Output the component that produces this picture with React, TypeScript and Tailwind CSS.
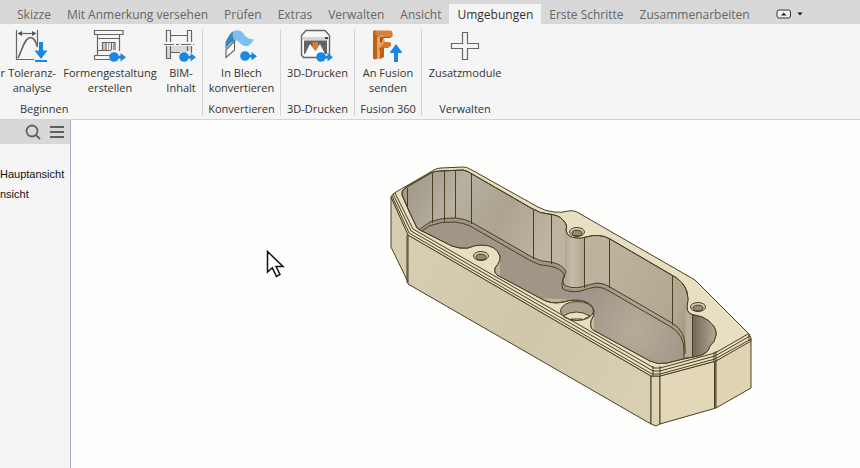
import { ReactNode } from "react";

const tabs = [
  "Skizze",
  "Mit Anmerkung versehen",
  "Prüfen",
  "Extras",
  "Verwalten",
  "Ansicht",
  "Umgebungen",
  "Erste Schritte",
  "Zusammenarbeiten",
];

const Badge = ({ x = 21, y = 28 }: { x?: number; y?: number }) => (
  <g transform={`translate(${x} ${y})`} fill="#1a87e0" stroke="none">
    <circle r="4.8" />
    <path d="M4-1.2H6.5V-4L12 .2 6.5 4.4V1.5H4Z" />
  </g>
);

const Icon = ({ children }: { children: ReactNode }) => (
  <svg
    width="34"
    height="34"
    viewBox="0 0 34 34"
    fill="none"
    stroke="#666"
    strokeWidth="1.2"
    aria-hidden="true"
  >
    {children}
  </svg>
);

const ToleranceIcon = () => (
  <Icon>
    <path d="M1.5 1V30.5H19M22.5 1V16" />
    <path d="M4 4.5H20" />
    <path d="M2.5 4.5 7 2V7ZM21.5 4.5 17 2V7Z" fill="#555" stroke="none" />
    <path d="M3 29C7 22 9 9 15.5 8.500C19 8.500 20.500 12 22.500 18" strokeWidth="1.6" />
    <path d="M24 13H28V21.500H32.500L26 30 19.500 21.500H24ZM20 31H32V33H20Z" fill="#1a87e0" stroke="none" />
  </Icon>
);

const MoldIcon = () => (
  <Icon>
    <path d="M1.500 1.500H30V5.500H1.500ZM4.500 5.500V26M26.500 5.500V22M4.500 9.500H26.500M4.500 21.500H18M1.500 30.500V26.500H17M1.500 30.500H17" />
    <path d="M9.500 21V13.500H22V21M13 13.500V21M18.500 13.500V21" />
    <path d="M11 14V21M15.700 14V21M20.500 14V21" stroke="#999" strokeWidth="1" />
    <Badge />
  </Icon>
);

const BimIcon = () => (
  <Icon>
    <path d="M7 17H23V23H7ZM24 17H27V22H24ZM3 17H6V29H3Z" fill="#d9d9d9" stroke="none" />
    <path d="M2.500 13V1.500H6.500V13M2.500 17V29.500H6.500V17M23.500 13V1.500H27.500V13M23.500 17V22M27.500 17V24M6.500 6.500H23.500M6.500 23.500H16" />
    <path d="M0 15.500H30" strokeDasharray="10 2 3 2" />
    <Badge x={20} />
  </Icon>
);

const SheetIcon = () => (
  <Icon>
    <path d="M2 21V28.500L10.500 21V12Z" fill="#fff" />
    <path d="M9.500 2C13 .5 17 1 19.500 4.500C22 8.500 25 10 30 10.500C27 15 24.500 18 21 17C16 16 15 10.500 11 11.500C9 9 8 6 9.500 2Z" fill="#7cc0ee" stroke="none" />
    <path d="M1.500 20.500V13C4 8 6 4 9.500 2C8 6 9 9 11 11.500C7 13 4 16 1.500 20.500Z" fill="#3b87bb" stroke="none" />
    <Badge y={27} />
  </Icon>
);

const PrinterIcon = () => (
  <Icon>
    <path d="M6 1.500H25L29.500 6.500V26L27.500 28.500H3.500L1.500 26V6.500Z" fill="#f8f8f8" strokeWidth="1.400" />
    <path d="M2 8H29V11H2Z" fill="#d5d5d5" stroke="none" />
    <path d="M25 8H28V10H25Z" fill="#444" stroke="none" />
    <path d="M4 11.500H27V25H4Z" fill="#636363" stroke="none" />
    <path d="M5 25 10 15 15.500 22 20 15 25 25Z" fill="#fff" stroke="none" />
    <path d="M12.500 13H18V18L15.300 22 12.500 18Z" fill="#e07c28" stroke="none" />
    <Badge />
  </Icon>
);

const FusionIcon = () => (
  <Icon>
    <g stroke="none">
      <path d="M2 2 5 1 10 7 9 29 3 30.500 2 29Z" fill="#b9601b" />
      <path d="M3 1.500H20L21.500 3V7L19 8H9L5 6Z" fill="#d9813a" />
      <path d="M9 13H18L20 14V17L17 19H9Z" fill="#d07730" />
      <path d="M6 8 12 6 14 12 8 20 11 27 9 30H6Z" fill="#eaa45e" />
      <path d="M9 8H19L21.500 6V7L19 9H12L11 13 9 14Z" fill="#a95516" />
      <path d="M9 19 13 18V28L9 30Z" fill="#b9601b" />
    </g>
    <path d="M25 15 31.500 24H27V33H23V24H18.500Z" fill="#1a87e0" stroke="none" />
  </Icon>
);

const PlusIcon = () => (
  <Icon>
    <path d="M14.500 3.500H19.500V14.500H30.500V19.500H19.500V30.500H14.500V19.500H3.500V14.500H14.500Z" />
  </Icon>
);

const Tool = ({ icon, lines, className = "" }: { icon: ReactNode; lines: string[]; className?: string }) => (
  <button className={`flex flex-col items-center whitespace-nowrap ${className}`}>
    {icon}
    <span className="flex flex-col items-center pt-[2px]">
      {lines.map((line) => (
        <span key={line}>{line}</span>
      ))}
    </span>
  </button>
);

const Group = ({ title, width, children }: { title: string; width: string; children: ReactNode }) => (
  <section className={`flex shrink-0 flex-col items-center justify-between ${width}`}>
    {children}
    <h2>{title}</h2>
  </section>
);

const Cursor = () => (
  <svg className="absolute left-[195px] top-[130px]" width="20" height="30" viewBox="0 0 20 30" aria-hidden="true">
    <path d="M1.500 1.500V22L6.300 17.800 10.500 26.500 14 24.500 10 16.500H17Z" fill="#fff" stroke="#111" strokeWidth="1.500" />
  </svg>
);

const cavity =
  "M420 230L417 228 409 211 402 195Q401 191 405 188L431 173Q435 171 440 171L463 170Q468 171 472 174L531 208Q541 214 549 214Q559 215 563 220Q568 225 566 230Q567 238 577 238Q581 239 586 237Q600 233 610 239L670 274Q684 281 687 292Q689 299 687 307Q687 314 694 315Q703 316 709 321Q717 328 716 335Q715 342 710 346Q708 354 698 356L683 359 667 363Q658 365 650 361L593 330Q590 328 591 321Q595 315 594 310Q591 301 577 300Q569 300 563 302Q551 305 540 298L497 275Q494 273 495 268Q501 261 500 256Q496 245 482 245Q474 245 468 248Q460 249 452 246Z";

const floor =
  "M420 229L430 222Q442 217 456 218Q465 219 471 222L532 257Q541 262 550 262Q563 264 566 272Q561 279 564 285Q571 289 582 287Q590 284 597 283Q604 283 610 287L672 323Q686 331 685 348V358L667 363Q658 365 650 361L593 330 577 300 540 298 497 275 468 248 452 246Z";

const floorEdge =
  "M420 229L430 222Q442 217 456 218Q465 219 471 222L532 257Q541 262 550 262Q563 264 566 272Q561 279 564 285Q571 289 582 287Q590 284 597 283Q604 283 610 287L672 323Q686 331 685 348V354";

const Hole = ({ x, y }: { x: number; y: number }) => (
  <g>
    <ellipse cx={x} cy={y} rx="7.500" ry="4.500" fill="#d8ceb1" />
    <ellipse cx={x} cy={y + 1} rx="5" ry="2.800" fill="#918979" />
  </g>
);

const Housing = () => (
  <svg
    className="absolute left-[314px] top-[40px]"
    width="376"
    height="272"
    viewBox="385 160 376 272"
    fill="none"
    stroke="#4a3f22"
    strokeWidth="1"
    strokeLinejoin="round"
    role="img"
    aria-label="Gehäuse"
  >
    <defs>
      <linearGradient id="front" x1="408" y1="250" x2="652" y2="390" gradientUnits="userSpaceOnUse">
        <stop stopColor="#d7cdb2" />
        <stop offset=".5" stopColor="#cfc6ab" />
        <stop offset="1" stopColor="#d9cfb3" />
      </linearGradient>
      <linearGradient id="wall" x1="400" y1="180" x2="715" y2="345" gradientUnits="userSpaceOnUse">
        <stop stopColor="#9c9484" />
        <stop offset=".16" stopColor="#b7afa0" />
        <stop offset=".3" stopColor="#aca490" />
        <stop offset=".45" stopColor="#bdb5a0" />
        <stop offset=".62" stopColor="#bcb39c" />
        <stop offset=".86" stopColor="#b1a890" />
        <stop offset="1" stopColor="#8c836e" />
      </linearGradient>
      <linearGradient id="boss" x1="563" y1="0" x2="586" y2="0" gradientUnits="userSpaceOnUse">
        <stop stopColor="#aaa18f" />
        <stop offset=".4" stopColor="#c4bca7" />
        <stop offset="1" stopColor="#ada48f" />
      </linearGradient>
      <radialGradient id="floor" cx="635" cy="330" r="110" gradientUnits="userSpaceOnUse">
        <stop stopColor="#b5ac98" />
        <stop offset=".5" stopColor="#a0978a" />
        <stop offset="1" stopColor="#9f9688" />
      </radialGradient>
      <linearGradient id="pocket" x1="692" y1="0" x2="716" y2="0" gradientUnits="userSpaceOnUse">
        <stop stopColor="#6e6655" />
        <stop offset="1" stopColor="#b3aa93" />
      </linearGradient>
    </defs>

    {/* outer walls */}
    <path d="M391 197 409 236 409 284 391 247Z" fill="#d6ccb1" />
    <path d="M408 235 651 376V424L408 284Z" fill="url(#front)" />
    <path d="M651 376H660V424L656 426 651 424Z" fill="#ddd2b4" />
    <path d="M660 376 716 361V408L660 424Z" fill="#e2d7b8" />
    <path d="M716 361 751 339V388L716 408Z" fill="#e0d3b3" />
    <path d="M407 235V283M714.500 361V408" />

    {/* rim */}
    <path
      d="M391 197Q392 194 396 192L434 170Q437 168 441 168L463 167Q467 167 470 169L538 207Q545 211 554 212Q562 213 568 211Q573 210 577 212L695 280 749 334Q752 338 751 341L716 361 660 376H651L408 235Z"
      fill="#e8dec1"
    />
    <path d="M393 194 411 231 653 371H660L715 356 750 336M395 193 413 229 654 368H660L715 353 748 334M392 196 409 233 652 374H660L715 359 751 339" />
    <path d="M653 366V376M660 366V376M714 352V361M716 351V361M749 334V341" />

    {/* cavity */}
    <path d={cavity} fill="url(#wall)" />
    <clipPath id="cavityClip">
      <path d={cavity} />
    </clipPath>
    <g clipPath="url(#cavityClip)">
      <path d={floor} fill="url(#floor)" stroke="none" />
      <path d="M565 234Q575 240 585 237V288Q571 290 564 286L565 274Z" fill="url(#boss)" stroke="none" />
      <path d="M692 314H717V346L692 358Z" fill="url(#pocket)" stroke="none" />
      <path d="M686 295H692V357H685Z" fill="#b8af99" stroke="none" />
      <path d="M494 268Q500 263 500 256V277L494 274Z" fill="#b8b0a1" stroke="none" />
      <path d="M590 320Q594 315 594 310V332L589 328Z" fill="#c8bea4" stroke="none" />
      <path d={floorEdge} />
      <path d={floorEdge} transform="translate(-1 4)" />
      <path d="M407.500 188V226M432.500 173V223M444.500 171V222M455.500 171V218M471.500 174V224M533.500 210V259M551.500 215V264M584.500 237V288M609.500 239V288M672.500 275V325M692.500 315V357" />
    </g>
    <path d={cavity} />

    <Hole x={481} y={256} />
    <Hole x={577} y={232} />
    <Hole x={698} y={307} />
    <ellipse cx="577" cy="311" rx="16.500" ry="9.500" fill="#aaa18c" />
    <path d="M563 316Q576 308 590 316Q577 325 563 316Z" fill="#e8dec1" />
    <path d="M571 319V321M571 319H582" />
  </svg>
);

const App = () => {
  return (
    <div className="flex min-h-screen flex-col overflow-hidden bg-[#fefefd] font-['Open_Sans','Noto_Sans',sans-serif] text-[12px] leading-[15px] text-[#333]">
      <nav className="flex h-6 items-end bg-[#d8d8d8] pl-[9px] text-[#666]">
        {tabs.map((tab) => (
          <button
            key={tab}
            className={
              tab === "Umgebungen"
                ? "h-5 whitespace-nowrap bg-[#f5f5f5] px-2 text-[#333]"
                : "h-5 whitespace-nowrap px-2"
            }
          >
            {tab}
          </button>
        ))}
        <button className="ml-[18px] flex h-5 items-center gap-[5px]" aria-label="Multifunktionsleiste minimieren">
          <svg width="16" height="10" viewBox="0 0 16 10">
            <rect x="1" y="1" width="13.500" height="8" rx="2" fill="#eef1f5" stroke="#333" />
            <path d="M5 6.500 7.750 3.500 10.500 6.500Z" fill="#222" />
          </svg>
          <svg width="6" height="4" viewBox="0 0 6 4">
            <path d="M.5 .5H5.500L3 3.500Z" fill="#111" />
          </svg>
        </button>
      </nav>

      <div className="flex h-24 divide-x divide-[#d4d4d6] border-b border-[#d4d4d6] bg-[#f5f5f5] pb-[3px] pt-[5px] text-[11px]">
        <section className="flex w-[203px] shrink-0 flex-col justify-between">
          <div className="flex items-start">
            <button className="flex w-[5px] justify-end pt-9">r</button>
            <Tool className="w-[54px]" icon={<ToleranceIcon />} lines={["Toleranz-", "analyse"]} />
            <Tool className="w-[102px]" icon={<MoldIcon />} lines={["Formengestaltung", "erstellen"]} />
            <Tool className="w-10" icon={<BimIcon />} lines={["BIM-", "Inhalt"]} />
          </div>
          <h2 className="pl-5">Beginnen</h2>
        </section>
        <Group title="Konvertieren" width="w-[78px]">
          <Tool icon={<SheetIcon />} lines={["In Blech", "konvertieren"]} />
        </Group>
        <Group title="3D-Drucken" width="w-[74px]">
          <Tool icon={<PrinterIcon />} lines={["3D-Drucken"]} />
        </Group>
        <Group title="Fusion 360" width="w-[67px]">
          <Tool icon={<FusionIcon />} lines={["An Fusion", "senden"]} />
        </Group>
        <Group title="Verwalten" width="w-[86px]">
          <Tool icon={<PlusIcon />} lines={["Zusatzmodule"]} />
        </Group>
      </div>

      <div className="flex flex-1">
        <aside className="w-[71px] shrink-0 border-r border-[#a8a8c4] bg-[#f5f5f5] text-[#111]">
          <div className="flex h-6 items-center justify-end gap-2 bg-[#d8d8d8] pr-[6px]">
            <button aria-label="Suchen">
              <svg width="18" height="18" viewBox="0 0 18 18" fill="none" stroke="#606060" strokeWidth="1.800">
                <circle cx="8" cy="8" r="5.500" />
                <path d="M12 12 16 16" />
              </svg>
            </button>
            <button aria-label="Menü">
              <svg width="14" height="12" viewBox="0 0 14 12" stroke="#606060" strokeWidth="2">
                <path d="M0 1H14M0 6H14M0 11H14" />
              </svg>
            </button>
          </div>
          <ul className="flex flex-col gap-[5px] pt-[23px] font-['Liberation_Sans',sans-serif] text-[11px]">
            <li>Hauptansicht</li>
            <li>nsicht</li>
          </ul>
        </aside>
        <main className="relative flex-1 overflow-hidden">
          <Cursor />
          <Housing />
        </main>
      </div>
    </div>
  );
};

export default App;
